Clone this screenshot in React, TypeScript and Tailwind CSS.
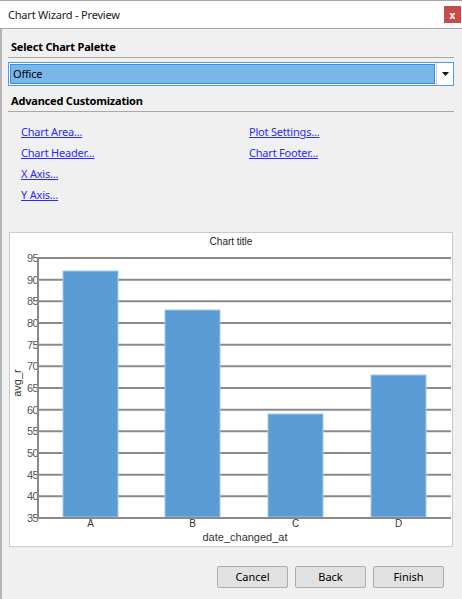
import React from "react";

const FONT = { fontFamily: '"Noto Sans", "Open Sans", sans-serif' };

interface Bar {
  label: string;
  value: number;
  x: number;
}

const BARS: Bar[] = [
  { label: "A", value: 92, x: 53 },
  { label: "B", value: 83, x: 155 },
  { label: "C", value: 59, x: 258 },
  { label: "D", value: 68, x: 361 },
];

const TICKS = [95, 90, 85, 80, 75, 70, 65, 60, 55, 50, 45, 40, 35];

// value -> svg y (35 sits on the x axis)
const yOf = (v: number) => 285 - ((v - 35) * 21.667) / 5;

function ChartPreview() {
  return (
    <svg width={442} height={313} className="block" style={{ fontFamily: '"Liberation Sans", Arial, sans-serif' }}>
      <text x={221} y={12} textAnchor="middle" fontSize={10} fill="#222">
        Chart title
      </text>

      {/* grid */}
      {TICKS.map((t) => (
        <g key={t}>
          <line x1={28} x2={441} y1={yOf(t)} y2={yOf(t)} stroke="#8a8a8a" strokeWidth={2} />
          <text x={28} y={yOf(t) + 4} textAnchor="end" fontSize={11} fill="#555" letterSpacing={-0.6}>
            {t}
          </text>
        </g>
      ))}
      <line x1={28} x2={28} y1={24} y2={286} stroke="#8a8a8a" strokeWidth={2} />

      {/* bars */}
      {BARS.map((b) => (
        <g key={b.label}>
          <rect
            x={b.x}
            y={yOf(b.value)}
            width={55}
            height={284 - yOf(b.value)}
            fill="#5b9bd5"
            stroke="#a3c8ea"
            strokeWidth={1}
          />
          <text x={b.x + 27.5} y={294} textAnchor="middle" fontSize={10} fill="#333">
            {b.label}
          </text>
        </g>
      ))}
      <line x1={28} x2={441} y1={285} y2={285} stroke="#8a8a8a" strokeWidth={2} />

      <text x={235} y={308} textAnchor="middle" fontSize={11} fill="#333">
        date_changed_at
      </text>
      <text x={11} y={150} textAnchor="middle" fontSize={11} fill="#333" transform="rotate(-90 11 150)">
        avg_r
      </text>
    </svg>
  );
}

function LinkItem({ children }: { children: React.ReactNode }) {
  return (
    <a
      href="#"
      className="block h-[21px] text-[11px] leading-[21px] tracking-[-0.2px] text-[#2a2aff] underline underline-offset-1"
    >
      {children}
    </a>
  );
}

function WinButton({ children }: { children: React.ReactNode }) {
  return (
    <button
      type="button"
      className="h-[22px] w-[71px] rounded-[2px] border border-[#adadad] bg-[#e1e1e1] text-[11px] leading-[16px] text-black"
    >
      {children}
    </button>
  );
}

export default function App() {
  return (
    <div className="flex h-[599px] w-[462px] flex-col overflow-hidden bg-[#f0f0f0]" style={FONT}>
      {/* Title bar */}
      <div className="flex h-[29px] shrink-0 items-center justify-between border-t border-b border-[#a7a7a7] bg-white pl-[8px] pr-[1px]">
        <span className="text-[11px] leading-[16px] tracking-[-0.2px] text-[#1a1a1a]">Chart Wizard - Preview</span>
        <div className="flex h-[17px] w-[17px] items-center justify-center bg-[#c94a4a] text-[10px] font-bold leading-none text-white">
          x
        </div>
      </div>

      <div className="flex flex-1 flex-col border-l-2 border-[#b4b4b4] pl-[6px] pr-[8px]">
        {/* Palette */}
        <div className="mt-[10px] border-b border-[#a8a8a8] pb-[2px] pl-[3px] text-[11px] font-bold leading-[16px] tracking-[-0.2px] text-black">
          Select Chart Palette
        </div>
        <div className="mt-[4px] flex h-[24px] border border-[#4f9ae3] bg-white">
          <div className="m-[1px] flex flex-1 items-center border border-[#3d8fdc] bg-[#7ab7e9] pl-[2px] text-[11px] leading-[16px] tracking-[-0.2px] text-black">
            Office
          </div>
          <div className="flex w-[17px] items-center justify-center border-l border-[#d0d0d0]">
            <svg width="7" height="4" viewBox="0 0 7 4">
              <path d="M0 0h7L3.5 4z" fill="#111" />
            </svg>
          </div>
        </div>

        {/* Advanced */}
        <div className="mt-[7px] border-b border-[#a8a8a8] pb-[2px] pl-[3px] text-[11px] font-bold leading-[16px] tracking-[-0.2px] text-black">
          Advanced Customization
        </div>
        <div className="mt-[9px] grid grid-cols-[228px_1fr] pl-[13px]">
          <div>
            <LinkItem>Chart Area...</LinkItem>
            <LinkItem>Chart Header...</LinkItem>
            <LinkItem>X Axis...</LinkItem>
            <LinkItem>Y Axis...</LinkItem>
          </div>
          <div>
            <LinkItem>Plot Settings...</LinkItem>
            <LinkItem>Chart Footer...</LinkItem>
          </div>
        </div>

        {/* Chart preview */}
        <div className="mt-[27px] ml-[1px] w-[444px] border border-[#cacaca] bg-white">
          <ChartPreview />
        </div>

        {/* Footer buttons */}
        <div className="mt-[19px] flex justify-end gap-[7px] pr-[10px]">
          <WinButton>Cancel</WinButton>
          <WinButton>Back</WinButton>
          <WinButton>Finish</WinButton>
        </div>
      </div>
    </div>
  );
}
